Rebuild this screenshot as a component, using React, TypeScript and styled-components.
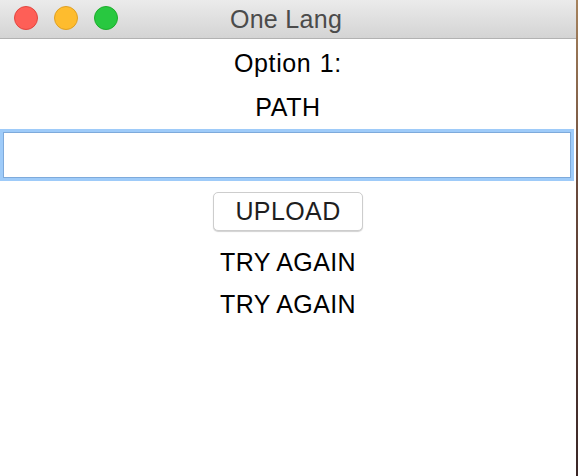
import React from 'react';
import styled, {createGlobalStyle} from 'styled-components';

const GlobalStyle = createGlobalStyle`
  html, body {
    margin: 0;
    padding: 0;
    height: 100%;
  }

  body {
    background: linear-gradient(180deg, #a6825c 0%, #6a4a3c 40%, #3a2626 100%);
    font-family: "Liberation Sans", Arial, sans-serif;
    overflow: hidden;
  }
`

type TLightProps = {
    $fill: string
    $edge: string
}

export default function App() {
    return (
        <>
            <GlobalStyle/>
            <Window>
                <TitleBar>
                    <Lights>
                        <Light $fill="#fe5f57" $edge="#e2463f"/>
                        <Light $fill="#febc2e" $edge="#dfa023"/>
                        <Light $fill="#28c840" $edge="#1dad2b"/>
                    </Lights>
                    <Title>One Lang</Title>
                </TitleBar>
                <Content>
                    <Label>Option 1:</Label>
                    <Label>PATH</Label>
                    <PathInput type="text"/>
                    <UploadButton>UPLOAD</UploadButton>
                    <Messages>
                        <Message>TRY AGAIN</Message>
                        <Message>TRY AGAIN</Message>
                    </Messages>
                </Content>
            </Window>
        </>
    );
}

const Window = styled.div`
  width: 576px;
  height: 100vh;
  background-color: #ffffff;
  display: flex;
  flex-direction: column;
`

const TitleBar = styled.div`
  height: 38px;
  border-bottom: 1px solid #b2b2b2;
  background: linear-gradient(180deg, #ebebeb 0%, #d4d4d4 100%);
  position: relative;
  display: flex;
  align-items: center;
  justify-content: center;
`

const Lights = styled.div`
  position: absolute;
  left: 14px;
  top: 6px;
  display: flex;
  gap: 16px;
`

const Light = styled.span<TLightProps>`
  width: 22px;
  height: 22px;
  border-radius: 50%;
  background-color: ${({$fill}) => $fill};
  border: 1px solid ${({$edge}) => $edge};
`

const Title = styled.span`
  font-size: 25px;
  line-height: 38px;
  letter-spacing: 0.3px;
  color: #4b4b4b;
  margin-left: -4px;
`

const Content = styled.div`
  padding-top: 2px;
  display: flex;
  flex-direction: column;
  align-items: center;
`

const Label = styled.div`
  font-size: 25px;
  line-height: 44px;
  letter-spacing: 0.6px;
  word-spacing: 1px;
  color: #000000;
`

const PathInput = styled.input`
  box-sizing: border-box;
  align-self: flex-start;
  width: 568px;
  height: 46px;
  margin: 3px 0 0 3px;
  border: 1px solid #7eaadb;
  border-radius: 0;
  outline: none;
  background-color: #ffffff;
  box-shadow: 0 0 0 3px #9ecbf9;
`

const UploadButton = styled.button`
  box-sizing: border-box;
  margin-top: 14px;
  width: 150px;
  height: 39px;
  padding: 0;
  border: 1px solid #cdcdcd;
  border-radius: 5px;
  background-color: #ffffff;
  box-shadow: 0 1px 1px rgba(0, 0, 0, 0.18);
  font-family: "Liberation Sans", Arial, sans-serif;
  font-size: 25px;
  line-height: 37px;
  letter-spacing: 0.4px;
  color: #1e1e1e;
`

const Messages = styled.div`
  margin-top: 10px;
  display: flex;
  flex-direction: column;
  align-items: center;
`

const Message = styled.div`
  font-size: 25px;
  line-height: 42px;
  letter-spacing: 0.4px;
  color: #000000;
`
